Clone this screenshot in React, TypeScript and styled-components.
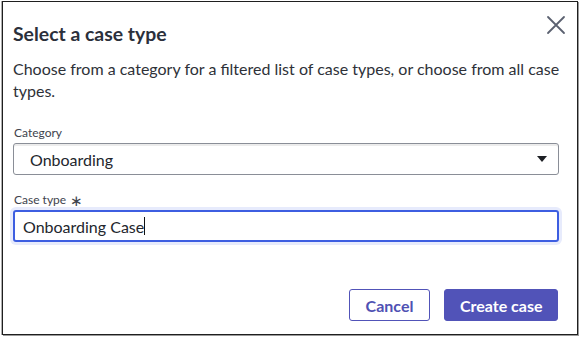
import React from "react";
import styled, { createGlobalStyle } from "styled-components";

const Global = createGlobalStyle`
  html, body { margin: 0; padding: 0; background: #ffffff; }
  body { font-family: Lato, "Open Sans", sans-serif; }
  * { box-sizing: border-box; }
`;

const Page = styled.div`
  width: 580px;
  height: 338px;
  padding: 1px 2px 2px 2px;
  background: #ffffff;
`;

const Dialog = styled.div`
  position: relative;
  width: 576px;
  height: 334px;
  border: 1px solid #1f1f1f;
  box-shadow: 1px 1px 0 #9a9a9a, -1px 0 0 #b0b0b0;
  background: #ffffff;
  padding: 17px 8px 13px 10px;
  display: flex;
  flex-direction: column;
  color: #2b2f38;
`;

const Title = styled.h1`
  margin: 0;
  font-size: 19.4px;
  font-weight: 700;
  line-height: 30px;
  color: #2b303b;
`;

const CloseButton = styled.button`
  position: absolute;
  top: 11px;
  right: 9px;
  width: 24px;
  height: 24px;
  padding: 0;
  border: none;
  background: transparent;
  display: flex;
  align-items: center;
  justify-content: center;
  cursor: pointer;
`;

const Description = styled.p`
  margin: 9px 0 0 0;
  font-size: 16px;
  line-height: 22px;
  color: #2e3138;
`;

const Field = styled.div<{ $top: number }>`
  display: flex;
  flex-direction: column;
  margin-top: ${(p) => p.$top}px;
`;

const Label = styled.label`
  font-size: 12px;
  line-height: 16px;
  color: #3e434d;
  display: flex;
  align-items: center;
  gap: 4px;
  margin-bottom: 2px;
  margin-left: 1px;
`;

const Asterisk = styled.span`
  font-size: 15px;
  font-weight: 300;
  line-height: 16px;
  color: #3e434d;
`;

const SelectBox = styled.div`
  height: 32px;
  width: 546px;
  border: 1px solid #8a8e97;
  border-radius: 3px;
  background: #ffffff;
  box-shadow: inset 0 2px 0 #ececec;
  display: flex;
  align-items: center;
  justify-content: space-between;
  padding: 0 11px 0 16px;
  font-size: 16px;
  color: #23262d;
`;

const InputBox = styled.div`
  height: 32px;
  width: 546px;
  border: 2px solid #3d5ee1;
  border-radius: 3px;
  box-shadow: 0 0 0 3px #e7ebfc;
  display: flex;
  align-items: center;
  padding: 0 8px;
  font-size: 16px;
  color: #23262d;
`;

const Caret = styled.span`
  display: inline-block;
  width: 1px;
  height: 18px;
  background: #111;
`;

const Footer = styled.div`
  margin-top: auto;
  display: flex;
  justify-content: flex-end;
  gap: 14px;
  padding-right: 11px;
`;

const Button = styled.button<{ $primary?: boolean }>`
  height: 32px;
  padding: 0 ${(p) => (p.$primary ? 14.5 : 16)}px;
  border-radius: 3px;
  font-family: Lato, "Open Sans", sans-serif;
  font-size: 16px;
  font-weight: 700;
  cursor: pointer;
  border: 1px solid #5153b8;
  background: ${(p) => (p.$primary ? "#5153b8" : "#ffffff")};
  color: ${(p) => (p.$primary ? "#ffffff" : "#4f51b3")};
`;

export default function App() {
  return (
    <>
      <Global />
      <Page>
        <Dialog>
          <Title>Select a case type</Title>
          <CloseButton aria-label="Close">
            <svg width="20" height="20" viewBox="0 0 20 20">
              <path d="M2 2 L18 18 M18 2 L2 18" stroke="#5b6170" strokeWidth="1.8" strokeLinecap="round" />
            </svg>
          </CloseButton>
          <Description>
            Choose from a category for a filtered list of case types, or choose from all case types.
          </Description>
          <Field $top={23}>
            <Label>Category</Label>
            <SelectBox>
              <span>Onboarding</span>
              <svg width="10" height="6" viewBox="0 0 10 6">
                <path d="M0 0 L10 0 L5 6 Z" fill="#1d1f24" />
              </svg>
            </SelectBox>
          </Field>
          <Field $top={17}>
            <Label>
              Case type <Asterisk>∗</Asterisk>
            </Label>
            <InputBox>
              <span>Onboarding Case</span>
              <Caret />
            </InputBox>
          </Field>
          <Footer>
            <Button>Cancel</Button>
            <Button $primary>Create case</Button>
          </Footer>
        </Dialog>
      </Page>
    </>
  );
}
